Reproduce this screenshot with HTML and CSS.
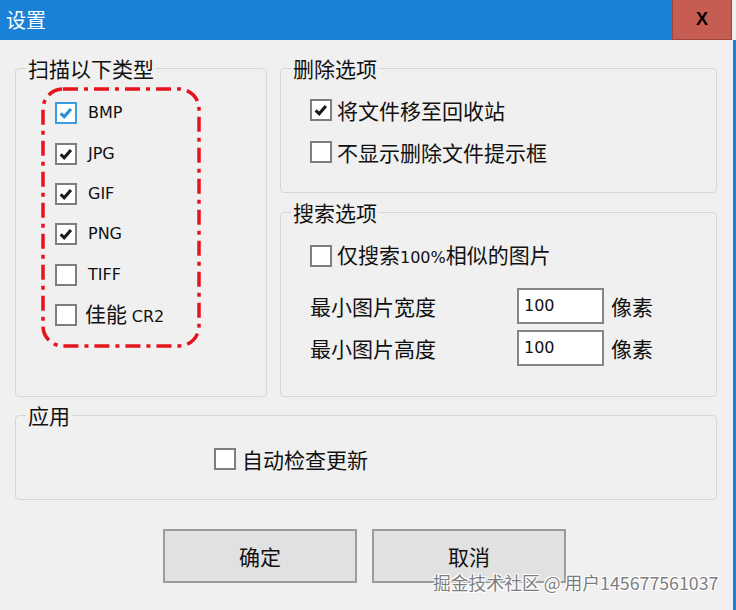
FILE: index.html
```html
<!DOCTYPE html>
<html lang="zh-CN">
<head>
<meta charset="utf-8">
<title>设置</title>
<link rel="stylesheet" href="styles.css">
</head>
<body>
<div class="window">
  <header class="titlebar">
    <span class="title">设置</span>
    <button class="close">X</button>
  </header>
  <div class="panel">
    <div class="columns">
      <fieldset class="group">
        <legend>扫描以下类型</legend>
        <div class="group-body types-body">
          <div class="check"><span class="box focus"><svg viewBox="0 0 22 22"><path d="M4.5 11.5 L8.8 15.6 L17 6" class="tick blue"/></svg></span><span class="latin">BMP</span></div>
          <div class="check"><span class="box"><svg viewBox="0 0 22 22"><path d="M4.5 11.5 L8.8 15.6 L17 6" class="tick"/></svg></span><span class="latin">JPG</span></div>
          <div class="check"><span class="box"><svg viewBox="0 0 22 22"><path d="M4.5 11.5 L8.8 15.6 L17 6" class="tick"/></svg></span><span class="latin">GIF</span></div>
          <div class="check"><span class="box"><svg viewBox="0 0 22 22"><path d="M4.5 11.5 L8.8 15.6 L17 6" class="tick"/></svg></span><span class="latin">PNG</span></div>
          <div class="check"><span class="box"></span><span class="latin">TIFF</span></div>
          <div class="check cjk-gap"><span class="box"></span><span>佳能 <span class="latin">CR2</span></span></div>
        </div>
      </fieldset>
      <div class="right-col">
        <fieldset class="group group-delete">
          <legend>删除选项</legend>
          <div class="group-body delete-body">
            <div class="check tight"><span class="box"><svg viewBox="0 0 22 22"><path d="M4.5 11.5 L8.8 15.6 L17 6" class="tick"/></svg></span><span>将文件移至回收站</span></div>
            <div class="check tight"><span class="box"></span><span>不显示删除文件提示框</span></div>
          </div>
        </fieldset>
        <fieldset class="group group-search">
          <legend>搜索选项</legend>
          <div class="group-body search-body">
            <div class="check tight"><span class="box"></span><span>仅搜索<span class="latin">100%</span>相似的图片</span></div>
            <div class="fields">
              <div class="field"><span>最小图片宽度</span><span class="input latin">100</span><span>像素</span></div>
              <div class="field"><span>最小图片高度</span><span class="input latin">100</span><span>像素</span></div>
            </div>
          </div>
        </fieldset>
      </div>
    </div>
    <fieldset class="group group-app">
      <legend>应用</legend>
      <div class="group-body app-body">
        <div class="check app-check"><span class="box"></span><span>自动检查更新</span></div>
      </div>
    </fieldset>
    <div class="buttons">
      <button class="btn">确定</button>
      <button class="btn">取消</button>
    </div>
  </div>
  <svg class="annotation" viewBox="0 0 162 263" width="162" height="263">
    <rect x="2" y="2" width="156" height="257" rx="20" ry="20"/>
  </svg>
  <div class="watermark">掘金技术社区 @ 用户145677561037</div>
</div>
</body>
</html>
```
FILE: styles.css
```css
* { box-sizing: border-box; }

body {
  margin: 0;
  background: #f0f0f0;
  font-family: "Noto Sans CJK SC", "Noto Sans", sans-serif;
  color: #111;
}

.window {
  position: relative;
  width: 736px;
  height: 610px;
  overflow: hidden;
  background: #f0f0f0;
}

.titlebar {
  display: flex;
  align-items: center;
  justify-content: space-between;
  width: 732px;
  height: 40px;
  background: #1a82d6;
}

.title {
  color: #fff;
  font-size: 20px;
  line-height: 20px;
  margin-left: 6px;
}

.close {
  width: 60px;
  height: 40px;
  padding: 0;
  background: #c65d52;
  border: 1px solid #9e443b;
  border-top: 0;
  font: bold 18px "Liberation Sans", sans-serif;
  color: #000;
}

.panel {
  height: 570px;
  padding: 18px 0 0 15px;
  box-shadow: inset -3px 0 0 #1a82d6;
}

.columns {
  display: grid;
  grid-template-columns: 252px 437px;
  column-gap: 13px;
}

.group {
  margin: 0;
  padding: 0;
  min-width: 0;
  border: 1px solid #d6d6d6;
  border-radius: 4px;
}

.group legend {
  font-size: 21px;
  line-height: 21px;
  padding: 0 2px;
  margin-left: 10px;
  color: #111;
}

.types-body {
  padding: 14px 0 0 39px;
}

.right-col {
  display: flex;
  flex-direction: column;
  gap: 9px;
}

.group-delete { height: 135px; }
.delete-body { padding: 10px 0 0 29px; }

.group-search { height: 195px; }
.search-body { padding: 12px 0 0 29px; }

.check {
  display: flex;
  align-items: center;
  gap: 11px;
  height: 40.4px;
  font-size: 21px;
  line-height: 24px;
}

.check.cjk-gap { gap: 8px; }

.check.tight {
  gap: 5px;
  height: 42px;
}

.box {
  flex: none;
  width: 22px;
  height: 22px;
  border: 2px solid #7e7e7e;
  background: #fff;
  display: flex;
  align-items: center;
  justify-content: center;
}

.box svg {
  width: 20px;
  height: 20px;
}

.box.focus { border-color: #3c9be0; }

.tick {
  fill: none;
  stroke: #1a1a1a;
  stroke-width: 3.8;
  stroke-linecap: butt;
  stroke-linejoin: miter;
}

.tick.blue { stroke: #2b8ed8; }

.latin {
  font-family: "DejaVu Sans", "Liberation Sans", sans-serif;
  font-size: 16px;
}

.fields {
  display: flex;
  flex-direction: column;
  gap: 6px;
  margin-top: 11px;
}

.field {
  display: grid;
  grid-template-columns: 200px 87px auto;
  column-gap: 7px;
  align-items: center;
  height: 36px;
  font-size: 21px;
  line-height: 24px;
}

.input {
  height: 36px;
  border: 2px solid #858585;
  background: #fff;
  padding-left: 5px;
  display: flex;
  align-items: center;
  color: #111;
}

.group-app {
  margin-top: 8px;
  width: 702px;
  height: 95px;
}

.app-body { padding: 13px 0 0 198px; }

.check.app-check { gap: 6px; }

.buttons {
  display: flex;
  gap: 15px;
  margin: 29px 0 0 148px;
}

.btn {
  width: 194px;
  height: 54px;
  padding: 0;
  background: #e1e1e1;
  border: 2px solid #9b9b9b;
  font-family: "Noto Sans CJK SC", sans-serif;
  font-size: 21px;
  color: #111;
}

.annotation {
  position: absolute;
  left: 41px;
  top: 87px;
}

.annotation rect {
  fill: none;
  stroke: #e5141c;
  stroke-width: 3.5;
  stroke-dasharray: 15 6 4 6;
}

.watermark {
  position: absolute;
  left: 433px;
  top: 571px;
  font-size: 17.8px;
  line-height: 22px;
  color: #7d7d7d;
  white-space: nowrap;
  text-shadow: 0 0 2px #fff, 1px 1px 0 #fff, -1px -1px 0 #fff, 1px -1px 0 #fff, -1px 1px 0 #fff;
}
```
